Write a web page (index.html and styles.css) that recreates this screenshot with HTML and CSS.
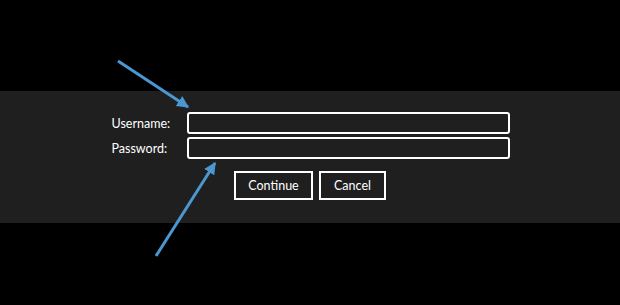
FILE: index.html
```html
<!DOCTYPE html>
<html lang="en">
<head>
    <meta charset="UTF-8">
    <title>Login</title>
    <link rel="stylesheet" href="styles.css">
</head>
<body>

<div class="login-band">
    <form class="login-form" onsubmit="return false">
        <div class="fields">
            <label for="username">Username:</label>
            <input type="text" id="username">
            <label for="password">Password:</label>
            <input type="password" id="password">
        </div>
        <div class="actions">
            <button type="submit">Continue</button>
            <button type="button">Cancel</button>
        </div>
    </form>
</div>

<!-- annotation arrows pointing at the two fields -->
<svg class="arrows" width="620" height="305" viewBox="0 0 620 305">
    <defs>
        <marker id="head" viewBox="0 0 10 10" refX="9" refY="5" markerWidth="4" markerHeight="4" orient="auto">
            <path d="M0 0 L10 5 L0 10 z" fill="#4b97d1"/>
        </marker>
    </defs>
    <line x1="118" y1="61" x2="188" y2="107" stroke="#4b97d1" stroke-width="3" marker-end="url(#head)"/>
    <line x1="156" y1="256" x2="215" y2="163" stroke="#4b97d1" stroke-width="3" marker-end="url(#head)"/>
</svg>

</body>
</html>
```

FILE: styles.css
```css
body {
    margin: 0;
    background: #000;
    font-family: Lato, "Open Sans", sans-serif;
    color: #fff;
    height: 305px;
    position: relative;
    overflow: hidden;
}
.login-band {
    margin-top: 91px;
    height: 132px;
    background: #1f1f1f;
    display: flex;
    justify-content: center;
    padding-top: 21px;
    box-sizing: border-box;
}
.login-form {
    width: 399px;
}
.fields {
    display: grid;
    grid-template-columns: 76px 1fr;
    row-gap: 3px;
    align-items: center;
}
label {
    font-size: 12.5px;
    padding-left: 1px;
}
input {
    height: 22px;
    box-sizing: border-box;
    background: #1f1f1f;
    border: 2px solid #fff;
    border-radius: 3px;
    color: #fff;
    padding: 0 4px;
    font-family: inherit;
    outline: none;
}
.actions {
    display: flex;
    justify-content: center;
    gap: 6px;
    margin-top: 12px;
}
button {
    height: 29px;
    padding: 0 10px;
    background: #1f1f1f;
    border: 2px solid #fff;
    border-radius: 0;
    color: #fff;
    font-family: inherit;
    font-size: 12.5px;
}
button[type="submit"] {
    width: 79px;
}
button[type="button"] {
    width: 67px;
}
.arrows {
    position: absolute;
    top: 0;
    left: 0;
    pointer-events: none;
}
```
